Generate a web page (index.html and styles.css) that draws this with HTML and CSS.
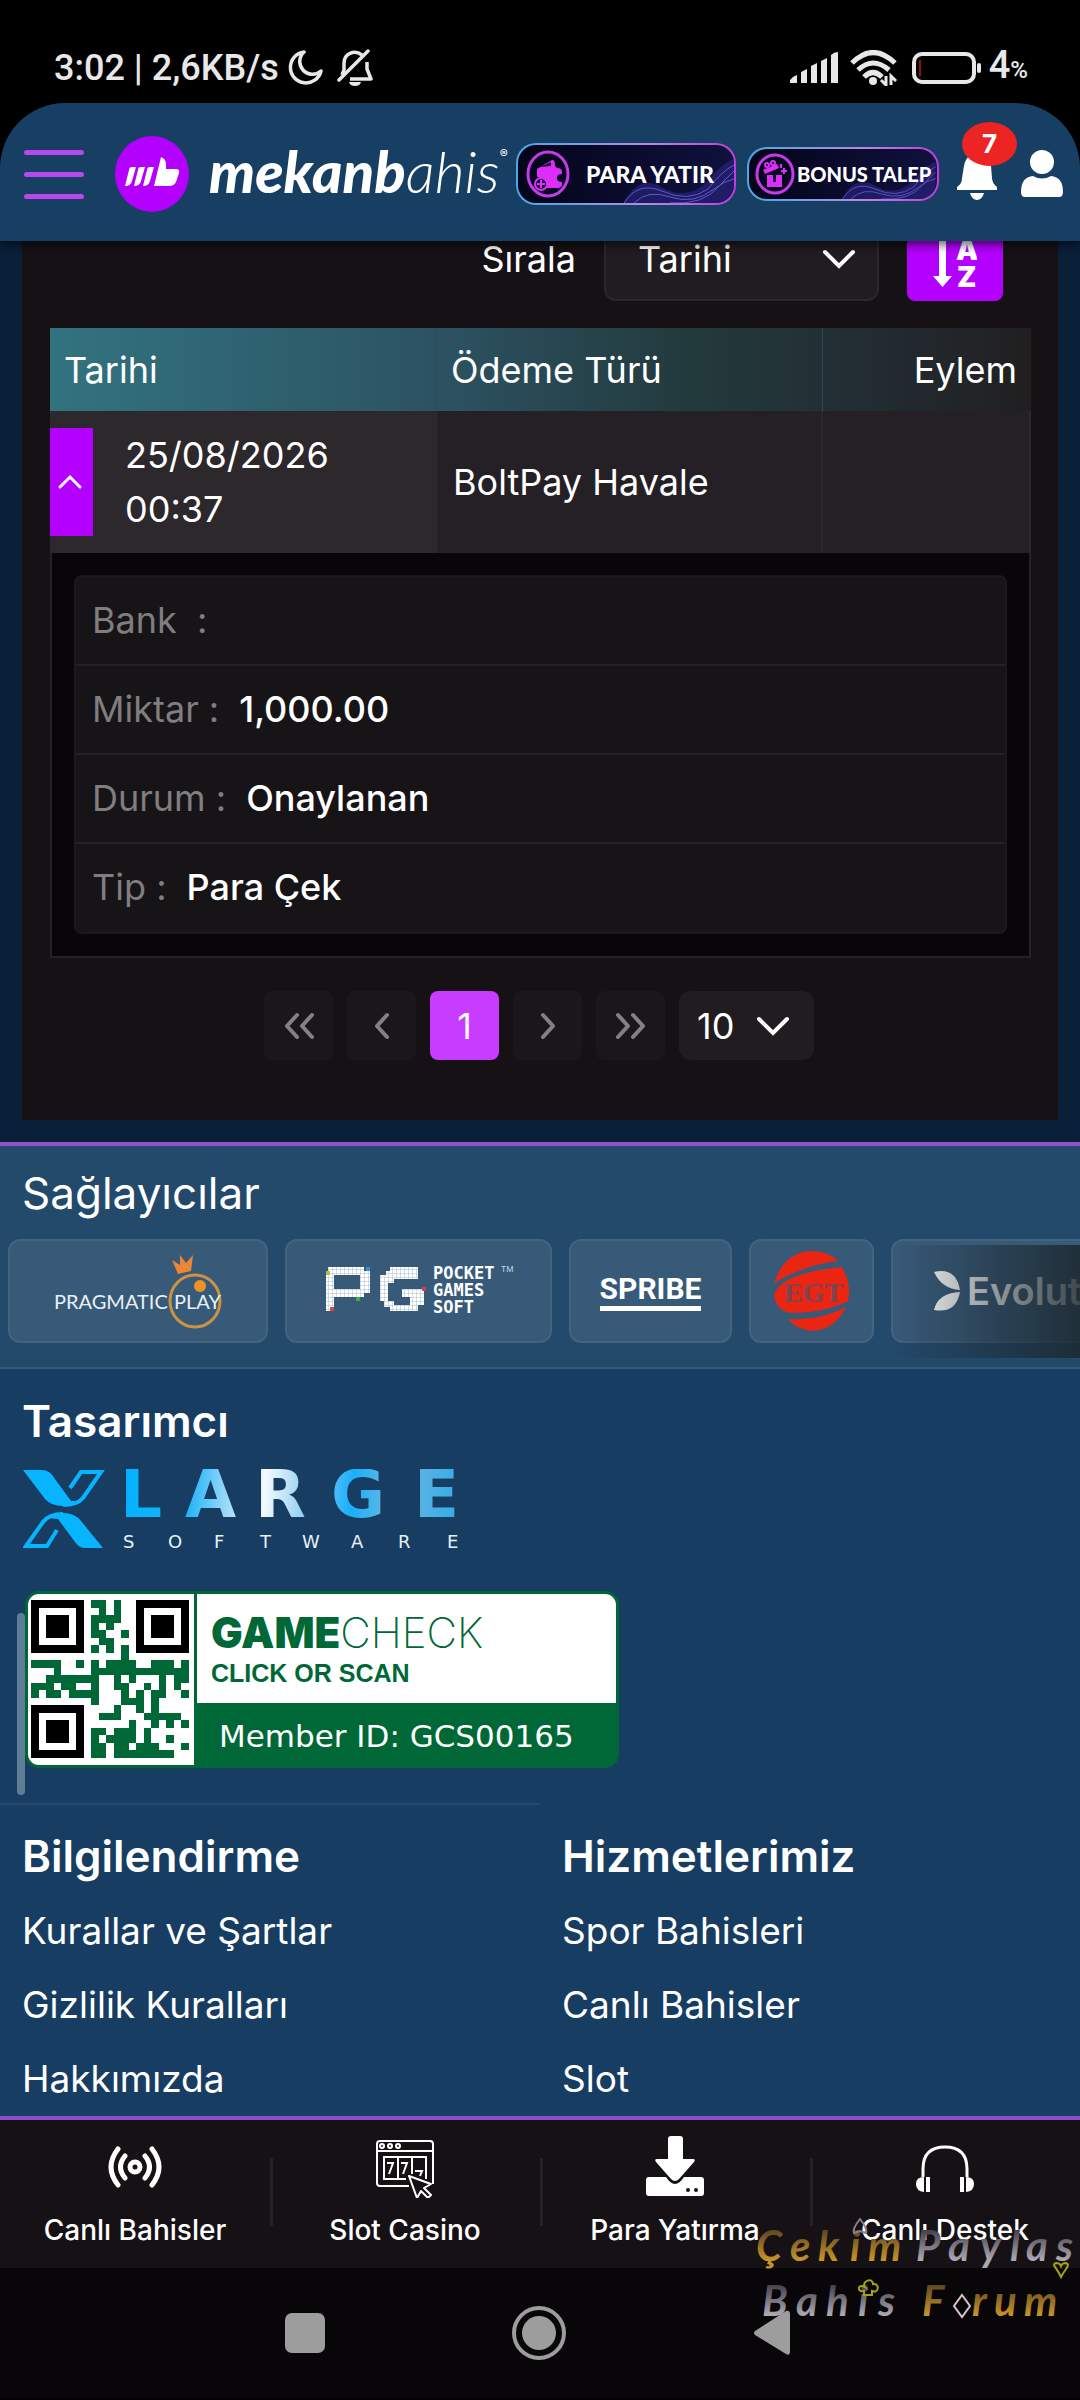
FILE: index.html
```html
<!DOCTYPE html>
<html lang="tr">
<head>
<meta charset="utf-8">
<meta name="viewport" content="width=device-width, initial-scale=1">
<title>mekanbahis</title>
<link rel="stylesheet" href="styles.css">
</head>
<body>
<div class="page">
  <div class="status">
    <span class="status-time">3:02 | 2,6KB/s</span>
    <svg class="ico-moon" width="36" height="36" viewBox="0 0 36 36"><path d="M17 2A15.500 15.500 0 1 0 34 21A12 12 0 0 1 17 2Z" fill="none" stroke="#e8e8e8" stroke-width="3.500" stroke-linejoin="round"/></svg>
    <svg class="ico-mute" width="36" height="38" viewBox="0 0 36 38"><path d="M30 13V20L34 30H13M25 6C17 0 7 5 7 14V21L5 26" fill="none" stroke="#e8e8e8" stroke-width="3.500" stroke-linejoin="round"/><path d="M2 31L31 2" stroke="#e8e8e8" stroke-width="3.500" stroke-linecap="round"/><path d="M12 33H24Q23 37 18 37Q13 37 12 33Z" fill="#e8e8e8"/></svg>
    <span class="grow"></span>
    <svg width="48" height="32" viewBox="0 0 48 32" fill="#e8e8e8"><path d="M0 31V28Q3 24 7 23V31ZM11 31V20L17 17V31ZM21 31V14L27 11V31ZM31 31V9L37 6V31ZM41 31V3Q44 0 48 0V31Z"/></svg>
    <svg class="ico-wifi" width="48" height="36" viewBox="0 0 48 36"><g fill="none" stroke="#e8e8e8" stroke-width="5"><path d="M2 13Q23-8 45 13"/><path d="M8 20Q23 6 39 20"/><path d="M14 27Q23 18 32 27"/></g><circle cx="23" cy="31" r="4" fill="#e8e8e8"/><path d="M36 26V35L31 30M41 35V26L46 31" fill="none" stroke="#e8e8e8" stroke-width="3"/></svg>
    <svg class="ico-batt" width="70" height="32" viewBox="0 0 70 32"><rect x="2" y="2" width="60" height="28" rx="8" fill="none" stroke="#e8e8e8" stroke-width="4"/><path d="M8 8V24" stroke="#8c1310" stroke-width="2"/><rect x="65" y="11" width="4" height="10" rx="2" fill="#e8e8e8"/></svg>
    <span class="status-batt">4<small>%</small></span>
  </div>

  <header class="header">
    <button class="menu" aria-label="Menü"><span></span><span></span><span></span></button>
    <a class="brand" href="#" aria-label="mekanbahis">
      <svg width="74" height="76" viewBox="0 0 74 76"><ellipse cx="37" cy="38" rx="37" ry="38" fill="#b400ff"/><g fill="#fff"><path d="M14 34Q14 31 17 31H21L17 45Q16 50 10 50ZM23 34Q23 31 26 31H30L26 45Q25 50 19 50ZM32 34Q32 31 35 31H39L35 45Q34 50 28 50Z"/><path d="M46 21Q51 23 51 28V33H61Q65 33 64 37L61 46Q59 50 54 50H39Z"/></g></svg>
      <span class="word"><b>mekanb</b><i>ahis</i></span><sup>®</sup>
    </a>
    <button class="promo promo-lg">
      <svg class="promo-wave" width="110" height="52" viewBox="0 0 110 52"><path d="M0 52Q12 26 34 34Q62 52 84 30Q98 12 110 8V52Z" fill="#241f70" opacity=".8"/><path d="M0 52Q14 30 38 40Q64 52 84 38Q98 20 110 14M10 52Q24 38 46 46Q70 54 90 38Q100 30 110 28M46 52Q80 54 94 36L110 20" fill="none" stroke="#5d5cc8" stroke-width="1"/></svg>
      <svg class="promo-ico" width="44" height="49" viewBox="0 0 44 49"><ellipse cx="22" cy="24" rx="20" ry="22" fill="none" stroke="#c53be8" stroke-width="3"/><path d="M11 19L26 10Q29 9 29 16L31 18Q36 18 36 22V24Q31 24 31 28T36 32V34Q36 38 32 38H20Q22 28 11 27Z" fill="#dd2dfb"/><path d="M14 17L25 12V16Z" fill="#120b35"/><circle cx="15" cy="34" r="6" fill="#120b35" stroke="#dd2dfb" stroke-width="2"/><path d="M15 30V38M11 34H19" stroke="#dd2dfb" stroke-width="2"/></svg>
      <span>PARA YATIR</span>
    </button>
    <button class="promo promo-sm">
      <svg class="promo-wave" width="96" height="44" viewBox="0 0 110 52"><path d="M0 52Q12 26 34 34Q62 52 84 30Q98 12 110 8V52Z" fill="#241f70" opacity=".8"/><path d="M0 52Q14 30 38 40Q64 52 84 38Q98 20 110 14M10 52Q24 38 46 46Q70 54 90 38Q100 30 110 28M46 52Q80 54 94 36L110 20" fill="none" stroke="#5d5cc8" stroke-width="1"/></svg>
      <svg class="promo-ico" width="40" height="43" viewBox="0 0 40 43"><ellipse cx="20" cy="21" rx="18" ry="19" fill="none" stroke="#c53be8" stroke-width="3"/><path d="M12 22H27V34H12Z" fill="#dd2dfb"/><path d="M19.500 22V29" stroke="#120b35" stroke-width="3"/><path d="M8 17L22 11L24 15L10 21Z" fill="#dd2dfb"/><g fill="none" stroke="#dd2dfb" stroke-width="2"><circle cx="12" cy="12" r="2"/><circle cx="18" cy="10" r="2"/><path d="M29 15V21M26 18H32M26 11V15"/></g></svg>
      <span>BONUS TALEP</span>
    </button>
    <button class="bell" aria-label="Bildirimler">
      <svg width="42" height="52" viewBox="0 0 42 52" fill="#fff"><path d="M8 18Q10 6 21 6T35 18L36 30Q36 35 41 39V42H1V39Q6 36 6 30Z"/><path d="M14 45H28Q26 52 21 52T14 45Z"/></svg>
      <span class="badge">7</span>
    </button>
    <button class="user" aria-label="Hesabım">
      <svg width="42" height="48" viewBox="0 0 42 48" fill="#fff"><ellipse cx="21" cy="12" rx="12" ry="12"/><path d="M0 42Q0 27 12 26Q21 31 30 26Q42 27 42 42Q42 47 38 47H4Q0 47 0 42Z"/></svg>
    </button>
  </header>

  <main class="main">
    <section class="panel">
      <div class="sort">
        <label for="sort">Sırala</label>
        <span class="select select-sort">
          <select id="sort"><option>Tarihi</option></select>
          <svg width="34" height="22" viewBox="0 0 34 22"><path d="M3 4L17 18L31 4" fill="none" stroke="#fff" stroke-width="4" stroke-linecap="round"/></svg>
        </span>
        <button class="sort-btn" aria-label="A-Z sırala">
          <svg width="44" height="60" viewBox="0 0 44 60"><path d="M6 0H13V47H19L9.500 58L0 47H6Z" fill="#fff"/><text x="23" y="31" class="az">A</text><text x="24" y="58" class="az">Z</text></svg>
        </button>
      </div>

      <table class="table">
        <colgroup><col class="c1"><col class="c2"><col class="c3"></colgroup>
        <thead><tr><th>Tarihi</th><th>Ödeme Türü</th><th class="right">Eylem</th></tr></thead>
        <tbody>
          <tr class="row">
            <td class="first"><div class="date"><button class="toggle" aria-label="Kapat"><svg width="26" height="16" viewBox="0 0 26 16"><path d="M3 13L13 3L23 13" fill="none" stroke="#fff" stroke-width="3" stroke-linecap="round"/></svg></button><span>25/08/2026<br>00:37</span></div></td>
            <td>BoltPay Havale</td>
            <td></td>
          </tr>
          <tr class="detail">
            <td colspan="3">
              <dl>
                <div><dt>Bank&nbsp; :</dt><dd></dd></div>
                <div><dt>Miktar :</dt><dd>1,000.00</dd></div>
                <div><dt>Durum :</dt><dd>Onaylanan</dd></div>
                <div><dt>Tip :</dt><dd>Para Çek</dd></div>
              </dl>
            </td>
          </tr>
        </tbody>
      </table>

      <nav class="pager" aria-label="Sayfalar">
        <button aria-label="İlk"><svg width="30" height="28" viewBox="0 0 30 28"><path d="M13 3L3 14L13 25M28 3L18 14L28 25"/></svg></button>
        <button aria-label="Önceki"><svg width="16" height="28" viewBox="0 0 16 28"><path d="M13 3L3 14L13 25"/></svg></button>
        <button class="on">1</button>
        <button aria-label="Sonraki"><svg width="16" height="28" viewBox="0 0 16 28"><path d="M3 3L13 14L3 25"/></svg></button>
        <button aria-label="Son"><svg width="30" height="28" viewBox="0 0 30 28"><path d="M2 3L12 14L2 25M17 3L27 14L17 25"/></svg></button>
        <span class="select select-size">
          <select aria-label="Sayfa boyutu"><option>10</option></select>
          <svg width="34" height="22" viewBox="0 0 34 22"><path d="M3 4L17 18L31 4" fill="none" stroke="#fff" stroke-width="4" stroke-linecap="round"/></svg>
        </span>
      </nav>
    </section>
  </main>

  <section class="providers">
    <h2>Sağlayıcılar</h2>
    <div class="cards">
      <a href="#" class="card w-pp"><svg width="168" height="80" viewBox="0 0 168 80"><text x="0" y="58" class="pp">PRAGMATIC</text><ellipse cx="141" cy="50" rx="25" ry="26" fill="none" stroke="#cc9142" stroke-width="3"/><text x="120" y="58" class="pp">PLAY</text><circle cx="146" cy="35" r="6" fill="#ed9326"/><path d="M118 9L126 14V4L132 12L139 4L137 20L124 23Z" fill="#ed8537"/></svg></a>
      <a href="#" class="card w-pg"><svg width="190" height="60" viewBox="0 0 190 60"><defs><pattern id="px" width="4" height="4" patternUnits="userSpaceOnUse"><rect width="4" height="4" fill="#fff"/><path d="M0 0H4M0 0V4" stroke="#a9bccc" stroke-width="1"/></pattern></defs><path d="M4 6H40V10H46V32H40V36H10V50H2V10H4ZM10 14V28H36V14ZM66 6H94V18H70V22H64V40H70V44H86V36H78V28H100V44H94V50H66V46H60V40H56V14H62V10H66Z" fill="url(#px)" fill-rule="evenodd"/><path d="M2 10H6V14H2Z" fill="#a8c63a"/><path d="M42 6H46V10H42Z" fill="#3b8ad8"/><path d="M32 36H36V40H32Z" fill="#35b24a"/><path d="M6 46H10V50H6Z" fill="#d44a4a"/><path d="M98 26H102V30H98Z" fill="#d43a5a"/><text x="109" y="18" class="pg">POCKET</text><text x="109" y="35" class="pg">GAMES</text><text x="109" y="52" class="pg">SOFT</text><text x="177" y="11" class="tm">TM</text></svg></a>
      <a href="#" class="card w-sp"><span class="spribe">SPRIBE</span></a>
      <a href="#" class="card w-egt"><svg width="76" height="80" viewBox="0 0 76 80"><path d="M0 32Q10 1 38 0Q54 0 64 10Q30 14 0 32ZM0 44Q6 22 68 16Q78 34 74 50Q50 62 18 62Q2 60 0 44ZM14 68Q46 70 72 56Q62 78 38 80Q22 78 14 68Z" fill="#ea2512"/><text x="10" y="51" class="egt">EGT</text></svg></a>
      <a href="#" class="card w-ev"><svg width="26" height="40" viewBox="0 0 26 40" fill="#fff"><path d="M0 1Q22-4 26 19Q8 18 0 1ZM0 39Q4 22 26 21Q22 43 0 39Z"/></svg><span>Evolution</span></a>
    </div>
  </section>

  <footer class="footer">
    <h3>Tasarımcı</h3>
    <svg class="xl" width="442" height="80" viewBox="0 0 442 80">
      <defs>
        <linearGradient id="lg" gradientUnits="userSpaceOnUse" x1="100" y1="0" x2="438" y2="30"><stop offset="0" stop-color="#00b2ff"/><stop offset=".2" stop-color="#22b4fa"/><stop offset=".3" stop-color="#8fd5f8"/><stop offset=".42" stop-color="#f4fbff"/><stop offset=".55" stop-color="#8bcdf1"/><stop offset=".68" stop-color="#18b0fb"/><stop offset=".8" stop-color="#70b8de"/><stop offset="1" stop-color="#31abea"/></linearGradient>
      </defs>
      <path d="M0 1H19Q27 1 32 10L48 32H55Q48 37 40 37Q28 37 22 30ZM80 79H62Q56 79 52 73L35 50L26 49Q32 44 40 44Q52 44 58 52Z" fill="#07b4ff"/>
      <path d="M47 19L58 3H78L60 29Q54 36 40 36M34 61L24 77H3L20 53Q26 45 40 45" fill="none" stroke="#07b4ff" stroke-width="4"/>
      <text class="large" y="48" fill="url(#lg)" x="97 162 232 308 391">LARGE</text>
      <text class="soft" y="79" fill="#e6f1f8" x="100 145 191 237 279 328 375 424">SOFTWARE</text>
    </svg>

    <div class="check-wrap">
      <span class="rail"></span>
      <a class="check" href="#">
        <svg class="qr" width="158" height="158" viewBox="0 0 21 21" shape-rendering="crispEdges"><path stroke="#006837" d="M8 .5h2m1 0h1M9 1.500h1m1 0h1M8 2.500h4M8 3.500h1m1 0h1M8 4.500h2m2 0h1M9 5.500h2M8 6.500h1m1 0h1m1 0h1M12 7.500h1M0 8.500h4m2 0h1m1 0h1m1 0h4m2 0h3m1 0h1M3 9.500h1m4 0h13M2 10.500h7m2 0h1m1 0h1m3 0h1m1 0h2M0 11.500h3m1 0h2m2 0h1m2 0h2m2 0h1m1 0h1m1 0h1M0 12.500h1m1 0h2m1 0h4m3 0h1m1 0h1m1 0h2m2 0h1M8 13.500h1m3 0h3m1 0h1M11 14.500h1m2 0h1m1 0h1M9 15.500h3m3 0h5M13 16.500h1m2 0h1m1 0h1m1 0h1M8 17.500h2m1 0h3m1 0h1M8 18.500h1m1 0h4m1 0h1m2 0h1M8 19.500h2m1 0h2m1 0h3m3 0h1M8 20.500h2m1 0h8"/><path fill="#000" fill-rule="evenodd" d="M0 0h7v7H0zM1 1v5h5V1zM2 2h3v3H2zM14 0h7v7h-7zM15 1v5h5V1zM16 2h3v3h-3zM0 14h7v7H0zM1 15v5h5v-5zM2 16h3v3H2z"/></svg>
        <span class="check-info">
          <span class="check-top"><span class="gc"><b>GAME</b>CHECK</span><span class="scan">CLICK OR SCAN</span></span>
          <span class="member">Member ID: GCS00165</span>
        </span>
      </a>
    </div>

    <div class="links">
      <div><h3>Bilgilendirme</h3><a href="#">Kurallar ve Şartlar</a><a href="#">Gizlilik Kuralları</a><a href="#">Hakkımızda</a></div>
      <div><h3>Hizmetlerimiz</h3><a href="#">Spor Bahisleri</a><a href="#">Canlı Bahisler</a><a href="#">Slot</a></div>
    </div>
  </footer>

  <nav class="tabs">
    <a href="#"><svg width="54" height="64" viewBox="0 0 54 64"><g fill="none" stroke="#fff" stroke-width="5" stroke-linecap="round"><path d="M10 15Q-4 33 10 51M44 15Q58 33 44 51M17 22Q8 33 17 44M37 22Q46 33 37 44"/><circle cx="27" cy="33" r="5" stroke-width="5"/></g></svg>Canlı Bahisler</a>
    <a href="#"><svg width="60" height="64" viewBox="0 0 60 64"><g fill="none" stroke="#fff" stroke-width="2"><path d="M34 52H5Q2 52 2 49V10Q2 7 5 7H55Q58 7 58 10V50M2 17H58M31 45H9V23H51V45M23 23V45M37 23V40"/><circle cx="7" cy="12" r="2"/><circle cx="15" cy="12" r="2"/><circle cx="23" cy="12" r="2"/><path d="M12 29H18L14 40M26 29H32L28 40M40 37H47L45 42" /><path d="M34 42L56 50L49 54L56 61L53 64L46 57L42 64Z" stroke-linejoin="round"/></g></svg>Slot Casino</a>
    <a href="#"><svg width="58" height="64" viewBox="0 0 58 64" fill="#fff"><path d="M25 2H34Q37 2 37 5V25H47Q50 25 48 28L33 45Q29 49 25 45L10 28Q8 25 11 25H22V5Q22 2 25 2Z"/><path fill-rule="evenodd" d="M3 43H20Q29 57 38 43H55Q58 43 58 46V59Q58 62 55 62H3Q0 62 0 59V46Q0 43 3 43ZM42 54A2 2 0 1 0 42 58A2 2 0 1 0 42 54ZM50 54A2 2 0 1 0 50 58A2 2 0 1 0 50 54Z"/></svg>Para Yatırma</a>
    <a href="#"><svg width="60" height="64" viewBox="0 0 60 64"><path d="M8 43V35Q8 13 30 13T52 35V43" fill="none" stroke="#fff" stroke-width="3"/><path d="M9 43V58Q1 57 1 50T9 43ZM11 43H15V58H11ZM45 43H49V58H45ZM51 43V58Q59 57 59 50T51 43Z" fill="#fff"/></svg>Canlı Destek</a>
  </nav>

  <div class="sysnav">
    <svg width="40" height="40" viewBox="0 0 40 40"><rect width="40" height="40" rx="7" fill="#9d9d9d"/></svg>
    <svg width="56" height="56" viewBox="0 0 56 56"><circle cx="28" cy="28" r="25" fill="none" stroke="#9d9d9d" stroke-width="4"/><circle cx="28" cy="28" r="17" fill="#9d9d9d"/></svg>
    <svg width="38" height="46" viewBox="0 0 38 46"><path d="M2 21L33 1Q37 0 37 4V42Q37 46 33 44L2 25Q0 23 2 21Z" fill="#9d9d9d"/></svg>
  </div>

  <div class="mark">
    <svg width="324" height="110" viewBox="0 0 324 110">
      <defs>
        <linearGradient id="gold" x1="0" y1="0" x2="0" y2="1"><stop offset=".2" stop-color="#5d4720"/><stop offset=".8" stop-color="#c89328"/></linearGradient>
        <linearGradient id="silver" x1="0" y1="0" x2="0" y2="1"><stop offset=".2" stop-color="#45414a"/><stop offset=".8" stop-color="#aca8b4"/></linearGradient>
      </defs>
      <text class="mk" y="50" fill="url(#gold)" x="0 34 62 94 112">Çekim</text>
      <text class="mk" y="50" fill="url(#silver)" x="160 192 224 254 270 300">Paylas</text>
      <text class="mk" y="105" fill="url(#silver)" x="6 40 70 102 122">Bahis</text>
      <text class="mk" y="105" fill="url(#gold)" x="166">F</text>
      <text class="mk" y="105" fill="url(#gold)" x="216 238 268">rum</text>
      <path d="M206 84L214 95L206 106L198 95Z" fill="none" stroke="#d9c4cb" stroke-width="2"/>
      <g fill="none" stroke="#a3a316" stroke-width="2"><path d="M109 76C105 70 117 66 117 73C124 72 123 83 116 80V84H108V80C101 82 101 72 109 76Z"/><path d="M305 66C300 55 295 54 300 52Q304 52 305 55Q306 52 310 52C315 54 309 58 305 66Z"/></g>
      <path d="M104 8Q112 18 110 22L104 20L98 22Q96 18 104 8Z" fill="none" stroke="#8d7f88" stroke-width="2"/>
    </svg>
  </div>
</div>
</body>
</html>
```
FILE: styles.css
```css
* { box-sizing: border-box; }
body { margin: 0; background: #000; color: #fff; font-family: Inter, "Noto Sans", sans-serif; font-size: 36px; line-height: 54px; }
a { color: inherit; text-decoration: none; }
button, select { font: inherit; color: inherit; border: 0; background: none; padding: 0; margin: 0; }
svg { display: block; flex: none; }
h2, h3, dl, dd { margin: 0; }
.page { position: relative; background: #000; overflow: hidden; }
.grow { flex: 1; }

.status { display: flex; align-items: center; height: 103px; padding: 32px 52px 0 54px; font-family: Roboto, sans-serif; font-weight: 500; font-size: 36px; line-height: 44px; color: #e8e8e8; }
.ico-moon { margin-left: 8px; }
.ico-mute { margin-left: 14px; }
.ico-wifi { margin-left: 12px; }
.ico-batt { margin: 0 7px 0 14px; }
.status-batt { font-size: 38px; }
.status-batt small { font-size: 24px; }

.header { position: relative; z-index: 2; display: flex; align-items: center; height: 138px; padding: 4px 17px 0 24px; background: #173e63; border-radius: 65px 65px 0 0; box-shadow: 0 4px 10px rgba(0, 0, 0, .6); }
.menu { display: flex; flex-direction: column; gap: 17px; width: 60px; margin-right: 31px; }
.menu span { height: 5px; border-radius: 3px; background: #b648ee; }
.brand { display: flex; align-items: center; width: 401px; }
.word { margin-left: 20px; font-family: Lato, sans-serif; font-style: italic; font-size: 58px; line-height: 60px; padding-bottom: 6px; }
.word b { font-weight: 900; }
.word i { font-weight: 300; }
.brand sup { align-self: flex-start; padding-top: 6px; font-size: 12px; line-height: 24px; }
.promo { position: relative; display: flex; align-items: center; border: 2px solid transparent; border-radius: 20px; background: linear-gradient(100deg, #04041a, #10123f) padding-box, linear-gradient(90deg, #4aa8e8, #b48ae0 60%, #c23be0) border-box; font-family: Lato, sans-serif; font-weight: 900; white-space: nowrap; overflow: hidden; }
.promo span, .promo-ico { position: relative; }
.promo-wave { position: absolute; right: 0; bottom: 0; }
.promo-lg { width: 220px; height: 62px; padding-left: 8px; gap: 16px; font-size: 23px; }
.promo-sm { width: 192px; height: 54px; margin-left: 11px; padding-left: 6px; gap: 2px; font-size: 20px; }
.bell { position: relative; width: 42px; margin-left: 17px; }
.badge { position: absolute; left: 6px; top: -26px; width: 55px; height: 44px; border-radius: 50%; background: #ec2424; font-size: 26px; font-weight: 700; line-height: 44px; text-align: center; }
.user { margin-left: auto; }

.main { padding: 0 22px 22px; margin-top: -24px; background: #0a2039; }
.panel { padding: 0 27px 60px 28px; background: #161115; }
.sort { display: flex; align-items: center; justify-content: flex-end; gap: 28px; padding-right: 28px; margin-bottom: 27px; }
.select { position: relative; display: block; }
.select select { appearance: none; width: 100%; height: 100%; border-radius: 12px; background: #201c20; }
.select svg { position: absolute; top: 50%; margin-top: -11px; pointer-events: none; }
.select-sort { width: 275px; height: 84px; }
.select-sort select { padding-left: 32px; border: 2px solid #2b272b; }
.select-sort svg { right: 23px; }
.sort-btn { display: flex; justify-content: center; align-items: center; width: 96px; height: 84px; border-radius: 8px; background: #b400ff; }
.az { font: 900 28px Inter, sans-serif; fill: #fff; }

.table { width: 100%; border-collapse: separate; border-spacing: 0; table-layout: fixed; }
.c1 { width: 387px; }
.c2 { width: 386px; }
.table thead tr { background: linear-gradient(90deg, #32737f, #2c5262 40%, #233a3d 65%, #222b31 85%, #211f20); }
.table th { height: 83px; padding: 0 14px; text-align: left; font-weight: 400; border-right: 1px solid #2e4a50; }
.table th:last-child { border-right: 0; }
.table .right { text-align: right; }
.row td { height: 142px; padding: 0 16px; background: #252025; border-right: 2px solid #2c282c; }
.row .first { padding: 0; background: #2c282c; }
.date { display: flex; align-items: center; gap: 32px; }
.toggle { display: flex; align-items: center; justify-content: center; width: 43px; height: 108px; padding-right: 4px; background: #b400ff; }
.detail td { padding: 22px; background: #080608; border: 2px solid #252125; border-top: 0; }
.detail dl { border: 2px solid #1c191c; border-radius: 8px; background: #171417; }
.detail dl div { display: flex; gap: 20px; height: 89px; padding: 16px; border-bottom: 2px solid #252225; }
.detail dl div:last-child { height: 88px; border-bottom: 0; }
.detail dt { color: #7f7e80; }
.detail dd { font-weight: 500; }

.pager { display: flex; justify-content: center; gap: 14px; margin-top: 33px; padding-right: 3px; }
.pager button { display: flex; align-items: center; justify-content: center; width: 69px; height: 69px; border-radius: 8px; background: #1a161a; }
.pager button path { fill: none; stroke: #848184; stroke-width: 4; stroke-linecap: round; stroke-linejoin: round; }
.pager .on { background: #c83cff; }
.select-size { width: 135px; height: 69px; }
.select-size select { padding-left: 18px; }
.select-size svg { right: 24px; }

.providers { border-top: 4px solid #9152c8; border-bottom: 2px solid #30597d; background: #23496b; overflow: hidden; }
.providers h2 { padding: 17px 22px 16px; font-size: 44px; font-weight: 400; line-height: 60px; }
.cards { position: relative; display: flex; gap: 17px; padding: 0 8px 24px; }
.cards::after { content: ""; position: absolute; right: 0; top: 6px; bottom: 9px; width: 190px; background: linear-gradient(90deg, rgba(28, 40, 46, 0), rgba(28, 40, 46, .85)); }
.card { display: flex; flex: none; align-items: center; justify-content: center; height: 104px; border: 2px solid #43637f; border-radius: 12px; background: #385a79; }
.w-pp { width: 260px; }
.w-pg { width: 267px; }
.w-sp { width: 163px; }
.w-egt { width: 125px; }
.w-ev { position: relative; z-index: 0; width: 260px; gap: 7px; font-size: 38px; font-weight: 600; justify-content: flex-start; padding-left: 41px; }
.pp { font: 400 20px Lato, sans-serif; fill: #e8f0f6; }
.pg { font: 700 17px "DejaVu Sans Mono", monospace; fill: #fff; }
.tm { font: 400 8px Inter, sans-serif; fill: #c9d6e0; }
.spribe { font-family: Roboto, sans-serif; font-size: 30px; font-weight: 700; line-height: 34px; border-bottom: 5px solid #fff; }
.egt { font: 700 28px "Liberation Serif", serif; fill: #7a4652; }

.footer { background: #173d62; }
.footer h3 { padding: 0 22px; font-size: 44px; font-weight: 600; line-height: 60px; }
.footer > h3 { padding-top: 22px; }
.xl { margin: 18px 0 42px 23px; }
.large { font: 700 66px "DejaVu Sans", sans-serif; }
.soft { font: 400 18px "DejaVu Sans", sans-serif; }
.check-wrap { position: relative; padding: 0 25px; margin-bottom: 35px; }
.rail { position: absolute; left: 17px; top: 22px; width: 8px; height: 182px; border-radius: 4px; background: #5f7d97; }
.check { display: flex; width: 594px; height: 177px; border: 3px solid #006837; border-radius: 14px; background: #006837; overflow: hidden; }
.qr { box-sizing: content-box; padding: 6px 5px 7px 3px; background: #fff; }
.check-info { flex: 1; margin-left: 3px; display: flex; flex-direction: column; }
.check-top { display: flex; flex: none; flex-direction: column; height: 109px; padding: 17px 14px 0; background: #fff; color: #006837; }
.gc { font-size: 42px; font-weight: 200; line-height: 44px; }
.gc b { font-weight: 900; }
.scan { font-family: "Liberation Sans", sans-serif; font-size: 25px; font-weight: 700; line-height: 36px; }
.member { padding-left: 22px; font-family: "DejaVu Sans", sans-serif; font-size: 31px; line-height: 62px; padding-top: 2px; }
.links { display: flex; }
.links div { flex: 1; display: flex; flex-direction: column; }
.links div:first-child { border-top: 2px solid #254a70; }
.links div:last-child { border-top: 2px solid transparent; }
.footer .links h3 { padding: 21px 22px 8px; }
.links a { padding: 0 22px; font-size: 37px; line-height: 74px; }

.tabs { display: flex; border-top: 4px solid #8a4fc4; background: #161115; height: 152px; }
.tabs a { position: relative; flex: 1; display: flex; flex-direction: column; align-items: center; gap: 12px; padding-top: 14px; font-size: 28px; font-weight: 500; line-height: 40px; }
.tabs a + a { background: linear-gradient(#252125, #252125) 0 38px / 3px 68px no-repeat; }
.sysnav { display: flex; align-items: center; justify-content: center; gap: 186px; height: 130px; padding-right: 4px; background: #080608; }
.mark { position: absolute; right: 0; bottom: 77px; }
.mk { font: italic 700 42px Lato, sans-serif; }
```
